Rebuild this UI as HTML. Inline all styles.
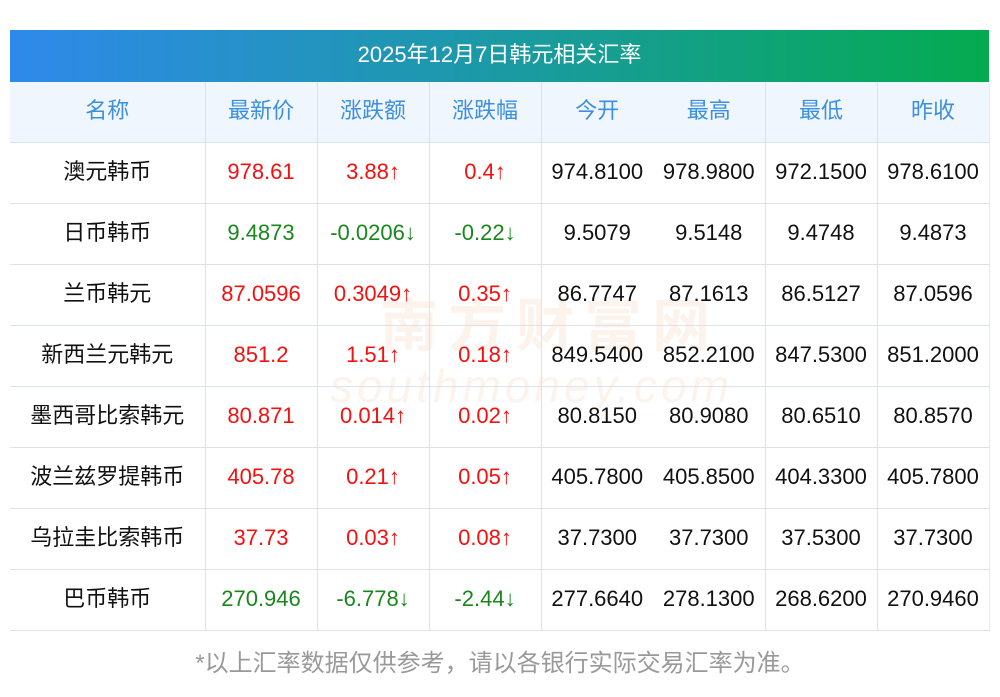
<!DOCTYPE html>
<html><head><meta charset="utf-8"><style>
body{margin:0;background:#fff;width:1000px;height:697px;overflow:hidden;font-family:"Liberation Sans","Noto Sans CJK SC",sans-serif;position:relative}
.title{position:absolute;left:10px;top:30px;width:979px;height:52px;background:linear-gradient(90deg,#2f89ea,#1b9aa5 50%,#04ab4f);color:#fff;font-size:22px;line-height:50px;text-align:center}
table{position:absolute;left:10px;top:82px;border-collapse:collapse;width:979px;table-layout:fixed}
td{height:57px;text-align:center;font-size:22px;line-height:24px;color:#111;border-right:1px solid #dde1ea;border-bottom:1px solid #dde1ea;padding:0 0 3px 0;vertical-align:middle}
tr.h td{background:#f0f6fe;color:#3b8fe0;font-size:22px}
td.n{border-right:none}
td:last-child{border-right:1px solid #e8ebf0}
.r{color:#f51010}.g{color:#19871c}
.wm{position:absolute;left:380px;top:292px;color:rgba(240,200,170,.22);font-size:58px;letter-spacing:10px;font-weight:bold;line-height:70px}
.wm2{position:absolute;left:330px;top:358px;color:rgba(240,200,170,.22);font-size:46px;font-style:italic;letter-spacing:4px;line-height:56px}
.foot{position:absolute;left:0;width:1000px;top:649px;line-height:30px;text-align:center;color:#999;font-size:24px}
</style></head><body>
<div class="title">2025年12月7日韩元相关汇率</div>
<div class="wm">南方财富网</div>
<div class="wm2">southmoney.com</div>
<table>
<colgroup><col style="width:195px"><col style="width:112px"><col style="width:112px"><col style="width:112px"><col style="width:112px"><col style="width:112px"><col style="width:112px"><col style="width:112px"></colgroup>
<tr class="h"><td>名称</td><td>最新价</td><td>涨跌额</td><td>涨跌幅</td><td class="n">今开</td><td>最高</td><td>最低</td><td>昨收</td></tr>
<tr><td>澳元韩币</td><td class="r">978.61</td><td class="r">3.88↑</td><td class="r">0.4↑</td><td class="n">974.8100</td><td>978.9800</td><td>972.1500</td><td>978.6100</td></tr>
<tr><td>日币韩币</td><td class="g">9.4873</td><td class="g">-0.0206↓</td><td class="g">-0.22↓</td><td class="n">9.5079</td><td>9.5148</td><td>9.4748</td><td>9.4873</td></tr>
<tr><td>兰币韩元</td><td class="r">87.0596</td><td class="r">0.3049↑</td><td class="r">0.35↑</td><td class="n">86.7747</td><td>87.1613</td><td>86.5127</td><td>87.0596</td></tr>
<tr><td>新西兰元韩元</td><td class="r">851.2</td><td class="r">1.51↑</td><td class="r">0.18↑</td><td class="n">849.5400</td><td>852.2100</td><td>847.5300</td><td>851.2000</td></tr>
<tr><td>墨西哥比索韩元</td><td class="r">80.871</td><td class="r">0.014↑</td><td class="r">0.02↑</td><td class="n">80.8150</td><td>80.9080</td><td>80.6510</td><td>80.8570</td></tr>
<tr><td>波兰兹罗提韩币</td><td class="r">405.78</td><td class="r">0.21↑</td><td class="r">0.05↑</td><td class="n">405.7800</td><td>405.8500</td><td>404.3300</td><td>405.7800</td></tr>
<tr><td>乌拉圭比索韩币</td><td class="r">37.73</td><td class="r">0.03↑</td><td class="r">0.08↑</td><td class="n">37.7300</td><td>37.7300</td><td>37.5300</td><td>37.7300</td></tr>
<tr><td>巴币韩币</td><td class="g">270.946</td><td class="g">-6.778↓</td><td class="g">-2.44↓</td><td class="n">277.6640</td><td>278.1300</td><td>268.6200</td><td>270.9460</td></tr>
</table>
<div class="foot">*以上汇率数据仅供参考，请以各银行实际交易汇率为准。</div>
</body></html>
